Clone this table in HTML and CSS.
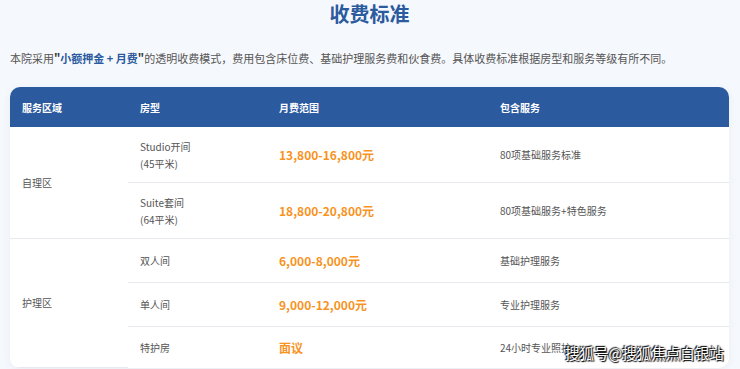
FILE: index.html
```html
<!DOCTYPE html>
<html lang="zh-CN">
<head>
    <meta charset="UTF-8">
    <meta name="viewport" content="width=device-width, initial-scale=1.0">
    <title>收费标准</title>
    <link rel="stylesheet" href="styles.css">
</head>
<body>
    <section class="pricing">
        <h2 class="pricing-title">收费标准</h2>
        <p class="pricing-intro">本院采用<strong>"<em>小额押金 + 月费</em>"</strong>的透明收费模式，费用包含床位费、基础护理服务费和伙食费。具体收费标准根据房型和服务等级有所不同。</p>

        <div class="table-card">
            <table class="price-table">
                <colgroup>
                    <col class="col-area">
                    <col class="col-room">
                    <col class="col-price">
                    <col class="col-service">
                </colgroup>
                <thead>
                    <tr>
                        <th>服务区域</th>
                        <th>房型</th>
                        <th>月费范围</th>
                        <th>包含服务</th>
                    </tr>
                </thead>
                <tbody>
                    <tr class="tall">
                        <td rowspan="2" class="area">自理区</td>
                        <td>Studio开间<br>(45平米)</td>
                        <td class="price">13,800-16,800元</td>
                        <td>80项基础服务标准</td>
                    </tr>
                    <tr class="tall">
                        <td>Suite套间<br>(64平米)</td>
                        <td class="price">18,800-20,800元</td>
                        <td>80项基础服务+特色服务</td>
                    </tr>
                    <tr>
                        <td rowspan="3" class="area">护理区</td>
                        <td>双人间</td>
                        <td class="price">6,000-8,000元</td>
                        <td>基础护理服务</td>
                    </tr>
                    <tr>
                        <td>单人间</td>
                        <td class="price">9,000-12,000元</td>
                        <td>专业护理服务</td>
                    </tr>
                    <tr class="last">
                        <td>特护房</td>
                        <td class="price">面议</td>
                        <td>24小时专业照护</td>
                    </tr>
                </tbody>
            </table>
        </div>
    </section>

    <div class="watermark">搜狐号@搜狐焦点白银站</div>
</body>
</html>
```

FILE: styles.css
```css
:root {
    --primary: #2b5a9e;
    --accent: #f7931e;
    --background: #f5f8fc;
    --line: #e6e9ee;
}

body {
    font-family: "Noto Sans CJK SC", "Noto Sans", sans-serif;
    margin: 0;
    padding: 0;
    background-color: var(--background);
    color: #555;
    height: 369px;
    overflow: hidden;
}

.pricing {
    padding: 0 10px;
    width: 719px;
}

.pricing-title {
    margin: 0;
    text-align: center;
    font-size: 20px;
    line-height: 28px;
    font-weight: 700;
    color: var(--primary);
}

.pricing-intro {
    margin: 21px 0 20px;
    font-size: 11px;
    line-height: 18px;
    color: #555;
    white-space: nowrap;
}

.pricing-intro strong {
    color: #333;
    font-weight: 700;
}

.pricing-intro em {
    font-style: normal;
    color: var(--primary);
}

.table-card {
    background: white;
    border-radius: 10px;
    overflow: hidden;
    box-shadow: 0 2px 10px rgba(0, 0, 0, 0.05);
}

.price-table {
    width: 100%;
    border-collapse: collapse;
    table-layout: fixed;
    font-size: 10px;
}

.col-area { width: 118px; }
.col-room { width: 139px; }
.col-price { width: 221px; }
.col-service { width: 241px; }

.price-table th {
    background: var(--primary);
    color: white;
    font-weight: 700;
    text-align: left;
    height: 40px;
    padding: 0 12px;
}

.price-table td {
    padding: 0 12px;
    height: 43px;
    line-height: 17px;
    border-bottom: 1px solid var(--line);
    vertical-align: middle;
    color: #555;
}

.price-table tr.tall td {
    height: 55px;
}

.price-table tr.last td {
    border-bottom: none;
    height: 40px;
}

.price-table td.price {
    color: var(--accent);
    font-size: 12px;
    font-weight: 700;
}

.watermark {
    position: absolute;
    left: 565px;
    top: 342px;
    font-size: 14.5px;
    line-height: 22px;
    color: white;
    text-shadow: 0 0 2px #000, 1px 1px 1px #000, -1px -1px 1px #000;
}
```
